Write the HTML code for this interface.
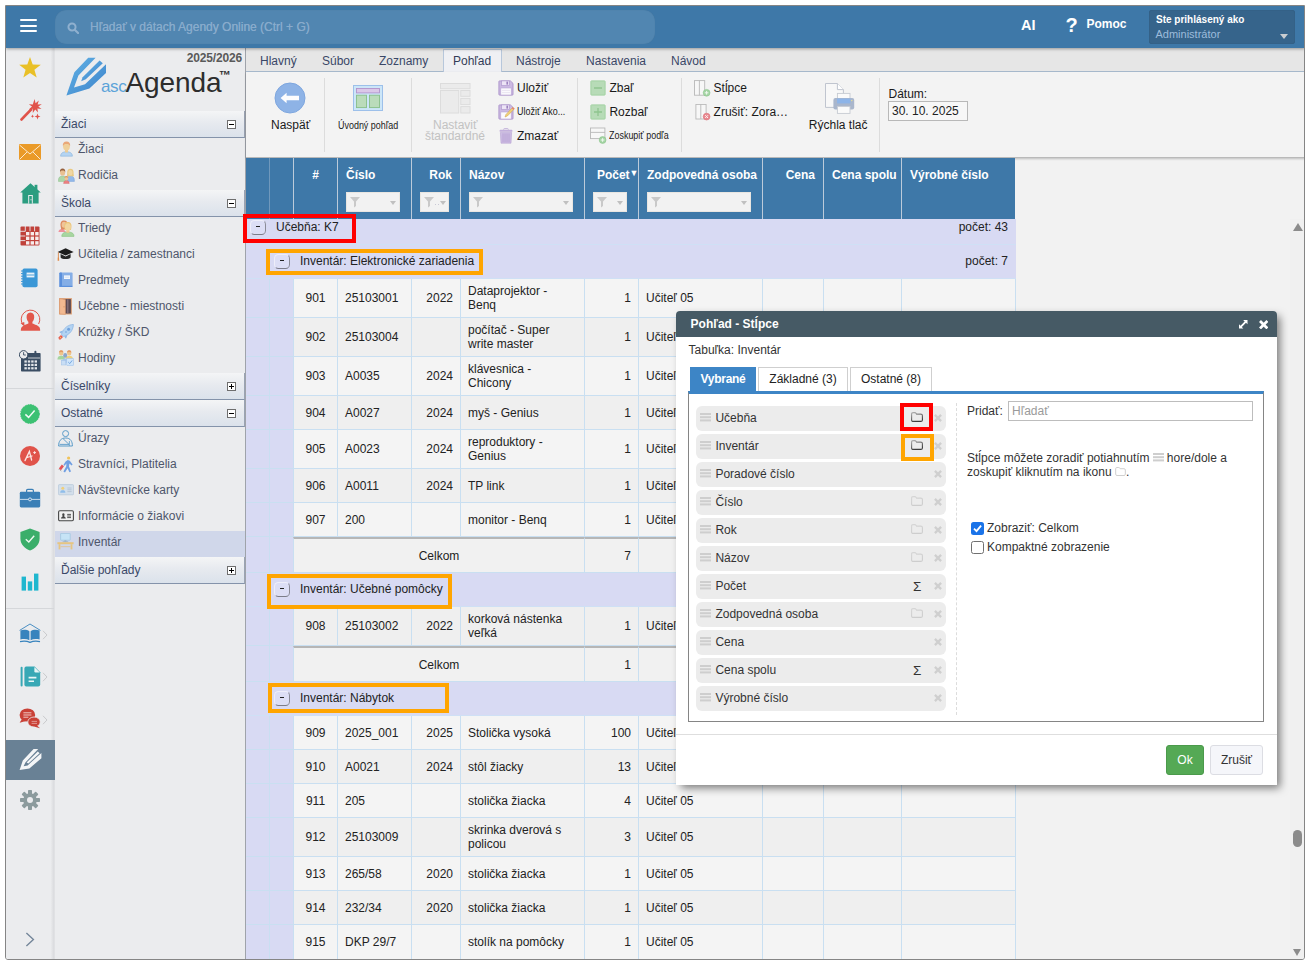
<!DOCTYPE html>
<html lang="sk">
<head>
<meta charset="utf-8">
<title>ascAgenda - Inventár</title>
<style>
*{box-sizing:border-box;margin:0;padding:0}
html,body{width:1310px;height:965px;background:#fff;overflow:hidden}
body{font-family:"Liberation Sans",sans-serif;font-size:12px;color:#222;position:relative}
.abs{position:absolute}
#frame{position:absolute;left:5px;top:5px;width:1300px;height:955px;border:1px solid #858585;overflow:hidden;background:#f2f2f2;border-radius:0 0 3px 3px}
#pg{position:absolute;left:-6px;top:-6px;width:1310px;height:965px}
/* top bar */
#top{position:absolute;left:6px;top:6px;width:1299px;height:42px;background:#3e78a8;box-shadow:0 1px 3px rgba(0,0,0,.35);z-index:5}
#search{position:absolute;left:49px;top:4px;width:600px;height:34px;border-radius:11px;background:#5186b1;box-shadow:inset 0 0 1px rgba(0,0,0,.15)}
#search span{position:absolute;left:35px;top:10px;font-size:12px;color:#88abcc;text-shadow:0 0 0.6px #88abcc;white-space:nowrap}
.ham{position:absolute;left:13.7px;width:17.6px;height:2px;background:#fff;border-radius:1px}
.tb{position:absolute;color:#fff;font-weight:bold;white-space:nowrap}
#user{position:absolute;left:1143px;top:4px;width:146px;height:34px;background:#36648b;border-radius:3px;box-shadow:inset 0 0 1px rgba(0,0,0,.3)}
/* sidebar */
#side{position:absolute;left:6px;top:48px;width:49px;height:912px;background:linear-gradient(to right,#ebecee 44.5px,#e4e5e7 46px,#dcdde0 47.5px,#e2e3e5 49px)}
#side svg{position:absolute}
.sep{position:absolute;left:0;width:48px;height:1px;background:#d5d7da}
/* nav */
#nav{position:absolute;left:55px;top:48px;width:191px;height:912px;background:#ebecee;border-right:1px solid #9fa3aa}
.nh{position:absolute;left:0;width:190px;height:27px;background:linear-gradient(#f4f5f6,#e7eaef 45%,#dbe2eb);border-bottom:1px solid #8493aa;border-right:1px solid #9aa3b3;color:#3a4868;font-size:12px;line-height:26px;padding-left:6px}
.nh i{position:absolute;left:172px;top:9px;width:9px;height:9px;border:1px solid #6e6e6e;background:#fff}
.nh i:before{content:"";position:absolute;left:1px;top:3px;width:5px;height:1px;background:#000}
.nh i.p:after{content:"";position:absolute;left:3px;top:1px;width:1px;height:5px;background:#000}
.ni{position:absolute;left:0;width:190px;height:26px;line-height:25px;padding-left:23px;color:#4e566b;font-size:12px;white-space:nowrap}
.ni svg{position:absolute;left:3px;top:4px}
.ni.sel{background:#d0d7ea;line-height:23px}.ni.sel svg{margin-top:-1px}
</style>
</head>
<body>
<div id="frame"><div id="pg">

<!-- TOP BAR -->
<div id="top">
  <div class="ham" style="top:13px"></div><div class="ham" style="top:18.5px"></div><div class="ham" style="top:24px"></div>
  <div id="search">
    <svg class="abs" style="left:11.5px;top:11.5px" width="12.5" height="12.5" viewBox="0 0 14 14"><circle cx="5.6" cy="5.6" r="4" fill="none" stroke="#8fb0cf" stroke-width="2.2"/><path d="M8.6 8.6 L12.4 12.4" stroke="#8fb0cf" stroke-width="2.4" stroke-linecap="round"/></svg>
    <span>Hľadať v dátach Agendy Online (Ctrl + G)</span>
  </div>
  <div class="tb" style="left:1015px;top:11px;font-size:14.5px">AI</div>
  <div class="tb" style="left:1059.5px;top:8px;font-size:20px">?</div>
  <div class="tb" style="left:1080.5px;top:11px;font-size:12px">Pomoc</div>
  <div id="user">
    <div class="tb" style="left:7px;top:4px;font-size:10px">Ste prihlásený ako</div>
    <div class="abs" style="left:6.5px;top:17.5px;font-size:11px;color:#9dbcdc">Administrátor</div>
    <div class="abs" style="left:131px;top:24px;width:0;height:0;border-left:4px solid transparent;border-right:4px solid transparent;border-top:5px solid #c9cdd1"></div>
  </div>
</div>

<!-- ICON SIDEBAR -->
<div id="side">
  <div class="sep" style="top:340px"></div>
  <div class="sep" style="top:560px"></div>
  <div class="abs" style="left:0;top:692px;width:49px;height:40px;background:#698195"></div>
  <!--SIDEICONS-START-->
<!-- star -->
<svg style="left:13px;top:9px" width="22" height="21" viewBox="0 0 22 21"><path d="M11 0L13.7 7.6 21.8 7.8 15.4 12.7 17.7 20.5 11 15.9 4.3 20.5 6.6 12.7 0.2 7.8 8.3 7.6Z" fill="#e9c027"/></svg>
<!-- wand -->
<svg style="left:14px;top:51px" width="22" height="22" viewBox="0 0 22 22"><path d="M1.6 20.4L11 10.6" stroke="#e0534a" stroke-width="2.8" stroke-linecap="round"/><path d="M14.5 0L15.6 4.2 18.8 1.4 17.6 5.4 21.8 5.2 18.3 7.5 21.5 10 17.4 9.6 18 13.6 15.2 10.6 12.8 14 12.8 9.8 8.8 10.4 12 7.6 8.8 5.2 12.8 5.4Z" fill="#e0534a"/><path d="M17.5 14.5L18.3 16.7 20.5 17.5 18.3 18.3 17.5 20.5 16.7 18.3 14.5 17.5 16.7 16.7Z" fill="#e0534a"/><path d="M12.5 15.5L13 16.7 14.2 17.2 13 17.7 12.5 19 12 17.7 10.8 17.2 12 16.7Z" fill="#e0534a"/></svg>
<!-- envelope -->
<svg style="left:13px;top:96px" width="22" height="16" viewBox="0 0 22 16"><rect width="22" height="16" rx="0.5" fill="#ea9a28"/><path d="M0.5 1L11 10 21.5 1M0.5 15.5L8 8M21.5 15.5L14 8" fill="none" stroke="#fbe9cf" stroke-width="1"/></svg>
<!-- home -->
<svg style="left:14px;top:135px" width="21" height="21" viewBox="0 0 21 21"><path d="M10.5 0.3L20.8 9.6H18.6V20.6H2.4V9.6H0.2Z" fill="#2b9d80"/><rect x="14.6" y="1.8" width="2.8" height="5" fill="#2b9d80"/><rect x="8.2" y="12" width="4.6" height="8.6" fill="#ebecee"/><rect x="9.2" y="13" width="2.6" height="7.6" fill="#2b9d80"/><rect x="10.6" y="16" width="0.8" height="1.4" fill="#ebecee"/></svg>
<!-- grid calendar -->
<svg style="left:14px;top:178px" width="20" height="20" viewBox="0 0 20 20"><rect x="0.5" y="0.5" width="19" height="19" rx="1" fill="#c0413a"/><g fill="#f7eceb"><rect x="6" y="6" width="3.4" height="3.4"/><rect x="10.6" y="6" width="3.4" height="3.4"/><rect x="15.2" y="6" width="3.4" height="3.4"/><rect x="6" y="10.6" width="3.4" height="3.4"/><rect x="10.6" y="10.6" width="3.4" height="3.4"/><rect x="15.2" y="10.6" width="3.4" height="3.4"/><rect x="6" y="15.2" width="3.4" height="3.4"/><rect x="10.6" y="15.2" width="3.4" height="3.4"/><rect x="15.2" y="15.2" width="3.4" height="3.4"/></g><g stroke="#ebecee" stroke-width="0.9"><path d="M5.3 0V5.3M10 0V5.3M14.6 0V5.3M0 5.3H5.3M0 10H5.3M0 14.6H5.3"/></g></svg>
<!-- notebook -->
<svg style="left:15px;top:220px" width="17" height="20" viewBox="0 0 17 20"><rect x="1.4" y="0.6" width="15.2" height="18.6" rx="1.8" fill="#3b97d6"/><g stroke="#3b97d6" stroke-width="1"><path d="M0 3H2M0 5.6H2M0 8.2H2M0 10.8H2M0 13.4H2M0 16H2"/></g><rect x="5.6" y="4.6" width="7.8" height="4.8" fill="#e8f2fa"/><path d="M5.6 7H13.4" stroke="#3b97d6" stroke-width="0.9"/></svg>
<!-- person with arrow circle -->
<svg style="left:14px;top:260px" width="21" height="24" viewBox="0 0 21 24"><path d="M3.2 17.2A9.3 9.3 0 1 1 18.6 16" fill="none" stroke="#e2574b" stroke-width="1"/><path d="M0.6 15.2L4.6 18.4 4.2 14Z" fill="#e2574b"/><path d="M10.4 4.6C13.2 4.6 14.4 6.8 14.2 9.4 14 11.6 13.2 13 12.4 13.8V15.4C14.6 16.4 18.4 17.2 19.6 19.6 20 20.6 20.2 21.6 20.2 22.8H0.8C0.8 21.6 1 20.6 1.4 19.6 2.6 17.2 6.2 16.4 8.4 15.4V13.8C7.6 13 6.8 11.6 6.6 9.4 6.4 6.8 7.6 4.6 10.4 4.6Z" fill="#e2574b"/></svg>
<!-- calendar clock -->
<svg style="left:13px;top:302px" width="22" height="22" viewBox="0 0 22 22"><rect x="2" y="3" width="19.6" height="18.6" rx="0.8" fill="#3a4d63"/><rect x="15.4" y="0.8" width="2" height="4" rx="1" fill="#3a4d63"/><g fill="#e3e6ea"><rect x="5.4" y="10.4" width="2.4" height="2.2"/><rect x="8.8" y="10.4" width="2.4" height="2.2"/><rect x="12.2" y="10.4" width="2.4" height="2.2"/><rect x="15.6" y="10.4" width="2.4" height="2.2"/><rect x="5.4" y="13.8" width="2.4" height="2.2"/><rect x="8.8" y="13.8" width="2.4" height="2.2"/><rect x="12.2" y="13.8" width="2.4" height="2.2"/><rect x="15.6" y="13.8" width="2.4" height="2.2"/><rect x="5.4" y="17.2" width="2.4" height="2.2"/><rect x="8.8" y="17.2" width="2.4" height="2.2"/><rect x="12.2" y="17.2" width="2.4" height="2.2"/><rect x="15.6" y="17.2" width="2.4" height="2.2"/></g><path d="M9 8H21" stroke="#ebecee" stroke-width="0.8"/><circle cx="4.6" cy="4.8" r="4.2" fill="#ebecee" stroke="#3a4d63" stroke-width="1"/><path d="M4.6 2.2V5H6.8" fill="none" stroke="#3a4d63" stroke-width="0.9"/></svg>
<!-- check circle -->
<svg style="left:14px;top:356px" width="20" height="20" viewBox="0 0 20 20"><circle cx="10" cy="10" r="9.4" fill="#3cc173" stroke="#3cc173" stroke-width="1" stroke-dasharray="1.6 1"/><path d="M5.4 10.4L8.6 13.4 14.6 6.6" fill="none" stroke="#f2fbf6" stroke-width="1.5"/></svg>
<!-- A+ -->
<svg style="left:14px;top:398px" width="20" height="20" viewBox="0 0 20 20"><circle cx="10" cy="10" r="10" fill="#e0534a"/><path d="M5 14.6L9.4 5.4 11.6 14M6.4 11.6L12 10" fill="none" stroke="#fbe6e4" stroke-width="1.3" stroke-linecap="round"/><path d="M13.2 6.6H16M14.6 5.2V8" stroke="#fbe6e4" stroke-width="1"/></svg>
<!-- briefcase -->
<svg style="left:13px;top:440px" width="22" height="20" viewBox="0 0 22 20"><path d="M7.6 4.2V2.6Q7.6 1.4 8.8 1.4H13.2Q14.4 1.4 14.4 2.6V4.2" fill="none" stroke="#3b7fb6" stroke-width="1.2"/><rect x="0.8" y="3.8" width="20.4" height="15.6" rx="1.4" fill="#3b7fb6"/><path d="M0.8 11.4H21.2" stroke="#c9dcec" stroke-width="1"/><circle cx="11" cy="11.4" r="1.5" fill="#3b7fb6" stroke="#dce8f2" stroke-width="0.9"/></svg>
<!-- shield -->
<svg style="left:14px;top:480px" width="20" height="23" viewBox="0 0 20 23"><path d="M10 0.6L19.6 4V10.6C19.6 16.6 15 20.6 10 22.6 5 20.6 0.4 16.6 0.4 10.6V4Z" fill="#3aae6a"/><path d="M5.8 11.2L8.8 14 14.2 7.8" fill="none" stroke="#eef9f2" stroke-width="1.4"/></svg>
<!-- bars -->
<svg style="left:15px;top:525px" width="18" height="18" viewBox="0 0 18 18"><rect x="0.6" y="3.6" width="4.4" height="14" fill="#1fb7cf"/><rect x="6.8" y="8.4" width="4.4" height="9.2" fill="#1fb7cf"/><rect x="13" y="0.6" width="4.4" height="17" fill="#1fb7cf"/></svg>
<!-- book -->
<svg style="left:13px;top:575px" width="22" height="21" viewBox="0 0 22 21"><path d="M0.6 7.4L11 1 21.4 7.4" fill="none" stroke="#3783bd" stroke-width="0.9"/><path d="M1.4 7.4C4.8 6.4 8 6.6 10.4 8.2V17.2C8 16 4.8 15.8 1.4 16.6ZM20.6 7.4C17.2 6.4 14 6.6 11.6 8.2V17.2C14 16 17.2 15.8 20.6 16.6Z" fill="#3783bd"/><path d="M1 18.6C4.6 17.8 8 18 11 19.4 14 18 17.4 17.8 21 18.6" fill="none" stroke="#3783bd" stroke-width="1.2"/></svg>
<svg style="left:36px;top:582px" width="6" height="10" viewBox="0 0 6 10"><path d="M1 0.8L5 5 1 9.2" fill="none" stroke="#c9cacc" stroke-width="1"/></svg>
<!-- doc -->
<svg style="left:14px;top:618px" width="21" height="21" viewBox="0 0 21 21"><rect x="0.6" y="0.8" width="2" height="19.6" rx="1" fill="#38a8b5"/><path d="M4.4 2.4Q4.4 0.6 6.2 0.6H14.6L20.2 6.2V18.4Q20.2 20.4 18.2 20.4H6.2Q4.4 20.4 4.4 18.4Z" fill="#38a8b5"/><path d="M14.4 1V5.2Q14.4 6.4 15.6 6.4H19.8" fill="#e8f5f6"/><path d="M8.6 11.6H16.4M8.6 15.2H14" stroke="#e8f5f6" stroke-width="1.6"/></svg>
<svg style="left:36px;top:624px" width="6" height="10" viewBox="0 0 6 10"><path d="M1 0.8L5 5 1 9.2" fill="none" stroke="#c9cacc" stroke-width="1"/></svg>
<!-- chat -->
<svg style="left:13px;top:660px" width="22" height="21" viewBox="0 0 22 21"><ellipse cx="8.4" cy="7" rx="7.8" ry="6.6" fill="#c94137"/><path d="M3 11L0.6 14.8 7 13Z" fill="#c94137"/><ellipse cx="15" cy="14" rx="6.2" ry="5" fill="#c94137" stroke="#ebecee" stroke-width="0.8"/><path d="M18 17.4L21 20.2 15 18.6Z" fill="#c94137"/><path d="M4.4 4.8H12.4M4.4 7H12.4M4.4 9.2H9.4" stroke="#f0c8c4" stroke-width="1"/><path d="M12.6 13.4H18M12.6 15.4H18" stroke="#e9a9a3" stroke-width="0.8"/></svg>
<svg style="left:36px;top:667px" width="6" height="10" viewBox="0 0 6 10"><path d="M1 0.8L5 5 1 9.2" fill="none" stroke="#c9cacc" stroke-width="1"/></svg>
<!-- pencil white -->
<svg style="left:13px;top:700px" width="23" height="23" viewBox="0 0 23 23"><path d="M0.6 22L3.8 12.6 14.6 1H19.2L6.4 14.4 4.6 18.2 8.6 17.4 22.4 5V10.2L10.4 20.4Z" fill="#f4f6f8"/><path d="M7.6 14.6L18.8 3.6 20.6 5.2 9.4 15.6Z" fill="#f4f6f8"/></svg>
<!-- gear -->
<svg style="left:14px;top:742px" width="20" height="20" viewBox="0 0 20 20"><g fill="#8c9b9d"><circle cx="10" cy="10" r="6.8"/><g id="gt"><rect x="8" y="0" width="4" height="20" rx="0.8"/></g><rect x="8" y="0" width="4" height="20" rx="0.8" transform="rotate(45 10 10)"/><rect x="8" y="0" width="4" height="20" rx="0.8" transform="rotate(90 10 10)"/><rect x="8" y="0" width="4" height="20" rx="0.8" transform="rotate(135 10 10)"/></g><circle cx="10" cy="10" r="3" fill="#ebecee"/></svg>
<!-- bottom chevron -->
<svg style="left:19px;top:884px" width="10" height="15" viewBox="0 0 10 15"><path d="M1.4 1L8.4 7.5 1.4 14" fill="none" stroke="#75879a" stroke-width="1.4"/></svg>
<!--SIDEICONS-END-->
</div>

<!-- NAV PANEL -->
<div id="nav">
  <div class="abs" style="right:3px;top:3px;font-size:12px;font-weight:bold;color:#5a5a5a;letter-spacing:-0.15px">2025/2026</div>
  <!--LOGO-START-->
<svg class="abs" style="left:11px;top:9px" width="41" height="40" viewBox="0 0 41 40"><defs><linearGradient id="lg" x1="0" y1="0" x2="1" y2="1"><stop offset="0" stop-color="#62b3e6"/><stop offset="1" stop-color="#3c82ca"/></linearGradient></defs><path d="M0.4 38.6L8.4 15.2 22.2 0.8H29.6L12.4 18.6 8 30.4 19 27.2 40 7.2V16L23.4 31.4Z" fill="url(#lg)"/><path d="M33.6 3.6L36.8 6.2 19.8 22.2 15.2 24.2 16.6 20.2Z" fill="url(#lg)"/></svg>
<div class="abs" style="left:46px;top:28.5px;font-size:17px;color:#5ba3d9;letter-spacing:-0.4px;line-height:20px">asc</div>
<div class="abs" style="left:70.5px;top:19px;font-size:28px;color:#2d2d2d;line-height:32px;letter-spacing:-0.1px">Agenda</div>
<div class="abs" style="left:164px;top:20px;font-size:12px;font-weight:bold;color:#2d2d2d;line-height:14px;letter-spacing:0">™</div>
<!--LOGO-END-->
  <div class="nh" style="top:63px">Žiaci<i></i></div>
  <div class="ni" style="top:89px"><svg style="left:4.5px;top:4px" width="13" height="16" viewBox="0 0 14 17"><path d="M0.6 16.2C0.6 12.8 3.4 11.4 7 11.4S13.4 12.8 13.4 16.2Z" fill="#b4d4f2" stroke="#8fb6de" stroke-width="0.7"/><rect x="5.4" y="8.6" width="3.2" height="3.6" fill="#eccb93"/><ellipse cx="7" cy="5.6" rx="3.7" ry="4.6" fill="#efd09a"/><path d="M3.1 5.6C2.6 2.2 4.4 0.5 7 0.5S11.4 2.2 10.9 5.6C10.2 3.8 9 3.2 7 3.2S3.8 3.8 3.1 5.6Z" fill="#e9a778"/></svg>Žiaci</div>
  <div class="ni" style="top:115px"><svg style="left:3px;top:4.5px" width="17" height="16" viewBox="0 0 17 16"><path d="M0.4 12.6C0.4 9.4 2 8 4.6 8S8.8 9.4 8.8 12.6V13.4H0.4Z" fill="#add6a9" stroke="#8fc08a" stroke-width="0.5"/><ellipse cx="4.6" cy="4.4" rx="2.5" ry="3.2" fill="#e9c091"/><path d="M2 4.4C1.6 1.6 2.8 0.4 4.6 0.4S7.6 1.6 7.2 4.4C6.6 2.8 5.8 2.6 4.6 2.6S2.6 2.8 2 4.4Z" fill="#96603d"/><path d="M8.4 12.6C8.4 9.4 10 8 12.4 8S16.4 9.4 16.4 12.6V13.4H8.4Z" fill="#93b9ea" stroke="#76a0d8" stroke-width="0.5"/><path d="M9.2 5.4C9 2.2 10.2 0.8 12.4 0.8S15.8 2.2 15.6 5.4L15.9 8.2H8.9Z" fill="#e9c983"/><ellipse cx="12.4" cy="4.8" rx="2.1" ry="2.8" fill="#f0d7a4"/><path d="M5.6 15.6C5.6 13.4 6.6 12.4 8.4 12.4S11.2 13.4 11.2 15.6Z" fill="#ea7f80" stroke="#d86468" stroke-width="0.4"/><ellipse cx="8.4" cy="10.4" rx="1.8" ry="2.1" fill="#eec594"/><path d="M6.6 10.2C6.4 8.6 7.2 7.9 8.4 7.9S10.4 8.6 10.2 10.2C9.8 9.4 9.2 9.2 8.4 9.2S7 9.4 6.6 10.2Z" fill="#d9955c"/></svg>Rodičia</div>
  <div class="nh" style="top:142px">Škola<i></i></div>
  <div class="ni" style="top:168px"><svg style="left:2.5px;top:3.5px" width="17" height="17" viewBox="0 0 17 17"><path d="M0.4 12C0.8 9.6 2.4 8.8 5 8.8L8 12Z" fill="#ef919c"/><path d="M2.6 6C2 2.4 3.4 0.4 6 0.4S9.6 2 9.4 4L7 9.4H3.2Z" fill="#dd8a5e"/><ellipse cx="6" cy="4.8" rx="2.4" ry="3" fill="#efc49a"/><path d="M3.8 16.4C3.8 13.2 6.2 12 9.8 12S16 13.2 16 16.4Z" fill="#a8d6a0" stroke="#88c282" stroke-width="0.6"/><rect x="8.4" y="9.6" width="3" height="3.2" fill="#ecca90"/><path d="M6.4 7.4C5.8 3.6 7.4 2 9.9 2S14 3.6 13.4 7.4L13 10H6.8Z" fill="#ecc77d"/><ellipse cx="9.9" cy="7" rx="2.9" ry="3.8" fill="#f2d6a0"/></svg>Triedy</div>
  <div class="ni" style="top:194px"><svg style="left:2px;top:6px" width="17" height="13" viewBox="0 0 17 13"><path d="M8.6 0.3L16.6 4 8.6 7.6 0.6 4Z" fill="#1c1c1c"/><path d="M3.6 6V9.4C5 11.4 12.2 11.4 13.6 9.4V6L8.6 8.4Z" fill="#262626"/><path d="M1.4 4.4V10.6" stroke="#d8884a" stroke-width="0.9"/><path d="M0.8 9.6H2L2.2 12.8H0.6Z" fill="#e08b4a"/></svg>Učitelia / zamestnanci</div>
  <div class="ni" style="top:220px"><svg style="left:4px;top:4px" width="14" height="16" viewBox="0 0 14 16"><rect x="0.4" y="0.4" width="13.2" height="14.6" rx="1" fill="#85aee6"/><rect x="0.4" y="0.4" width="2.6" height="14.6" rx="0.8" fill="#5b90dc"/><path d="M0.6 14.4H13.4" stroke="#5b90dc" stroke-width="1.2"/><rect x="5" y="3.4" width="6" height="3.6" fill="#f3f7fc"/><path d="M5.6 5.2H10.4" stroke="#c3d6f0" stroke-width="0.7"/></svg>Predmety</div>
  <div class="ni" style="top:246px"><svg style="left:4px;top:4px" width="13" height="17" viewBox="0 0 13 17"><rect x="0.6" y="0.6" width="11.8" height="15.4" fill="#5c4a52" stroke="#e0a67c" stroke-width="1"/><path d="M0.6 0.6L6.4 1.6V16.4L0.6 16Z" fill="#f2b991" stroke="#d9966a" stroke-width="0.6"/><rect x="8.2" y="1.4" width="1.2" height="14" fill="#8a7680"/><circle cx="5" cy="8.8" r="0.6" fill="#c88a5e"/></svg>Učebne - miestnosti</div>
  <div class="ni" style="top:272px"><svg style="left:3px;top:4px" width="16" height="16" viewBox="0 0 16 16"><path d="M15.4 0.4C11 0.6 7.4 2.8 4.8 7.2L3.4 10.4 5.6 12.6 8.8 11.2C13.2 8.6 15.2 5 15.4 0.4Z" fill="#b3d3f2" stroke="#86b2e2" stroke-width="0.7"/><circle cx="10.6" cy="5.2" r="1.5" fill="#6fa0dc"/><circle cx="8" cy="8" r="0.9" fill="#86b2e2"/><path d="M5 6.6L1.2 8 3.2 9.6ZM9.4 11L8 14.8 6.4 12.8Z" fill="#8ab5e6"/><path d="M3 11L0.4 13.6 1 15.4 2.6 15.6 5 13Z" fill="#e4574f"/><path d="M2.6 12.6L1.4 14.2 2.2 14.6 3.4 13.4Z" fill="#f5c05a"/></svg>Krúžky / ŠKD</div>
  <div class="ni" style="top:298px"><svg style="left:2px;top:4px" width="17" height="16" viewBox="0 0 17 16"><ellipse cx="4.2" cy="3" rx="2.2" ry="2.6" fill="#efc58c"/><path d="M2 2.6C2 0.8 3 0.2 4.2 0.2S6.4 0.8 6.4 2.6C5.6 1.8 2.8 1.8 2 2.6Z" fill="#e39a62"/><ellipse cx="12.2" cy="3" rx="2.2" ry="2.6" fill="#efc58c"/><path d="M10 2.6C10 0.8 11 0.2 12.2 0.2S14.4 0.8 14.4 2.6C13.6 1.8 10.8 1.8 10 2.6Z" fill="#e39a62"/><path d="M0.4 9.6C0.4 6.8 2 5.8 4.2 5.8S8 6.8 8 9.6Z" fill="#a5d59f"/><path d="M8.4 9.6C8.4 6.8 10 5.8 12.2 5.8S16 6.8 16 9.6Z" fill="#f0d27a"/><ellipse cx="8.2" cy="5.4" rx="2" ry="2.3" fill="#8da5c8"/><path d="M4.6 13C4.6 9.8 6 8.4 8.2 8.4S11.8 9.8 11.8 13Z" fill="#a9c6ec"/><rect x="4.4" y="10.4" width="4.4" height="4.6" fill="#c9def5" stroke="#a0c0e6" stroke-width="0.5"/><rect x="9.6" y="8.4" width="7" height="7" rx="0.6" fill="#d2e6fa" stroke="#9cc0ea" stroke-width="0.6"/><path d="M11.2 12L12.8 13.6 15.2 10.4" fill="none" stroke="#6a9fdc" stroke-width="0.9"/></svg>Hodiny</div>
  <div class="nh" style="top:325px">Číselníky<i class="p"></i></div>
  <div class="nh" style="top:352px">Ostatné<i></i></div>
  <div class="ni" style="top:378px"><svg style="left:3px;top:4px" width="15" height="17" viewBox="0 0 15 17"><circle cx="7.6" cy="3.6" r="3" fill="none" stroke="#5a9bc8" stroke-width="1"/><path d="M0.6 16C0.6 11.4 2.6 8 7.6 8S14.4 11.4 14.4 16Z" fill="none" stroke="#5a9bc8" stroke-width="1"/><path d="M5 8.6L11 14.4H1.6" fill="none" stroke="#5a9bc8" stroke-width="0.9"/><path d="M11.4 11V16" stroke="#5a9bc8" stroke-width="0.8"/></svg>Úrazy</div>
  <div class="ni" style="top:404px"><svg style="left:3px;top:4px" width="16" height="17" viewBox="0 0 16 17"><circle cx="10.6" cy="2" r="1.6" fill="#f0c35a"/><path d="M9.8 4L7.6 5.4 5.4 9 6.6 9.8 8.4 7.4 8.2 10.4 5.4 15.6 7 16.4 9.6 12.2 11.4 16.2 13 15.6 11 10.6 11.4 7.4 13.6 9.6 14.6 8.6 11.8 4.8Z" fill="#709fe2"/><path d="M0.8 12.4L3.8 8.6 6 10.2 3 14.2Z" fill="#e4555a"/><path d="M2.4 14.4L3.2 15M0.8 13.2L1.4 13.8" stroke="#777" stroke-width="0.8"/></svg>Stravníci, Platitelia</div>
  <div class="ni" style="top:430px"><svg style="left:3px;top:6px" width="16" height="12" viewBox="0 0 16 12"><rect x="0.4" y="0.6" width="15.2" height="10.2" rx="1" fill="#d3dfeb" stroke="#b5c6d8" stroke-width="0.7"/><circle cx="4.8" cy="4.2" r="1.5" fill="#f0cf7a"/><path d="M2.2 8.8C2.2 6.8 3.4 6.2 4.8 6.2S7.4 6.8 7.4 8.8Z" fill="#8fbdea"/><path d="M9.4 4H13.6M9.4 5.8H13.6M9.4 7.6H13.6" stroke="#b4c4d4" stroke-width="0.9"/></svg>Návštevnícke karty</div>
  <div class="ni" style="top:456px"><svg style="left:3px;top:6px" width="16" height="12" viewBox="0 0 16 12"><rect x="0.6" y="0.8" width="14.8" height="10" rx="1.2" fill="#f1f1f1" stroke="#454545" stroke-width="1.1"/><path d="M3 8.6C3 7.2 4 7 4.6 6.6V5.8C4 5.2 4 3.2 5.4 3.2S6.8 5.2 6.2 5.8V6.6C6.8 7 7.8 7.2 7.8 8.6Z" fill="#454545"/><path d="M9.2 4.4H13M9.2 6H13M9.2 7.6H13" stroke="#454545" stroke-width="0.9"/></svg>Informácie o žiakovi</div>
  <div class="ni sel" style="top:483px"><svg style="left:2px;top:3px" width="17" height="17" viewBox="0 0 17 17"><rect x="3.6" y="0.4" width="9.6" height="6.8" rx="0.4" fill="#c6e4f6" stroke="#9cc4e0" stroke-width="0.7"/><rect x="7.4" y="7.4" width="2" height="1.2" fill="#9ab0c0"/><rect x="5.6" y="8.4" width="5.6" height="0.8" fill="#9ab0c0"/><rect x="0.4" y="9.2" width="16.2" height="2" fill="#e6c582"/><rect x="1.6" y="11.2" width="1.8" height="5.2" fill="#e6c582"/><rect x="13.6" y="11.2" width="1.8" height="5.2" fill="#e6c582"/><rect x="3.4" y="13" width="10.2" height="1.2" fill="#dcc8a8"/></svg>Inventár</div>
  <div class="nh" style="top:509px">Ďalšie pohľady<i class="p"></i></div>
</div>

<!--MAIN-START-->
<style>
/* main */
#tabs{position:absolute;left:246px;top:48px;width:1059px;height:24px;background:#e6e6e6;border-bottom:1px solid #a9bbcf}
#tabs span{position:absolute;top:6px;font-size:12px;color:#3a4767;white-space:nowrap}
#tabs .act{position:absolute;left:197px;top:1px;width:59px;height:23px;background:#eff0f4;border:1px solid #b7c7db;border-bottom:0}
#rib{position:absolute;left:246px;top:72px;width:1059px;height:86px;background:#f3f3f3;border-bottom:1px solid #b9b9b9;box-shadow:0 1px 2px rgba(0,0,0,.22);z-index:3}
#rib .vs{position:absolute;top:6px;width:1px;height:74px;background:#dcdcdc}
#rib .t{position:absolute;white-space:nowrap;color:#1a1a1a;font-size:12px;line-height:14px}
#rib .s{font-size:10px;line-height:12px;transform:scaleX(0.895);transform-origin:0 0}
#rib svg{position:absolute}
/* table */
#th{position:absolute;left:246px;top:158px;width:769px;overflow:hidden;z-index:4;height:61px;background:#3e78a8}
#th .h{position:absolute;top:0;height:61px;border-right:1px solid #bccbda;color:#fff;font-weight:bold;font-size:12px;padding:10px 8px 0 8px;white-space:nowrap}
#th .f{position:absolute;top:34px;height:20px;background:#f2f2f2;border:1px solid #e9e6e1}
#th .f svg{position:absolute;left:3px;top:4px}
#th .f i{position:absolute;right:3px;top:7.5px;width:0;height:0;border-left:3.5px solid transparent;border-right:3.5px solid transparent;border-top:4px solid #c0c0c0}
#tbl{position:absolute;left:246px;top:0;width:770px;height:960px}
.gr{position:absolute;left:0;width:770px;background:#d8daf3;border-bottom:1px solid #cfe0f5}
.gr u{position:absolute;left:23px;top:0;bottom:0;width:1px;background:#cde0f3}
.gr span{position:absolute;white-space:nowrap;color:#222;font-size:12px;line-height:15px}
.gr em{position:absolute;right:8px;font-style:normal;font-size:12px;line-height:15px;color:#222}
.tg{position:absolute;width:16px;height:15px;border-radius:4.5px;background:#dcdef5;border:1px solid;border-color:#eeeef9 #8a8b97 #7c7d89 #eeeef9}
.tg:after{content:"";position:absolute;left:5px;top:5px;width:4px;height:1px;background:#222}
.rw{position:absolute;left:0;width:770px;background:#d8daf3}
.rw u{position:absolute;left:23px;top:0;bottom:0;width:1px;background:#c9dff1;border-bottom:0}
.rw u.u2{left:0;width:48px;top:auto;bottom:0;height:1px;background:#c9dff1}
.rw .c{position:absolute;top:0;bottom:0;background:#f4f4f4;border-right:1px solid #c9dff1;border-bottom:1px solid #c9dff1;padding:0 7px;white-space:nowrap;font-size:12px;color:#222}
.rw.a .c{background:#efefef}
.rw .num{text-align:center;padding:0;border-left:1px solid #c9dff1}
.rw .rok,.rw .poc{text-align:right}
.rw .two{display:inline-block;vertical-align:middle;line-height:14px;position:relative;top:-1px}
.rw s{position:absolute;left:48px;top:0;width:722px;height:3px;background:linear-gradient(#b4b7ba,#c6c8ca 60%,#e2e2e2)}
.ck .c{background:#f1f1f1;border-top:2px solid #b6b6b6;line-height:34px}
</style>
<div id="tabs">
  <div class="act"></div>
  <span style="left:14px">Hlavný</span><span style="left:76px">Súbor</span><span style="left:133px">Zoznamy</span><span style="left:207px;color:#333c58">Pohľad</span><span style="left:270px">Nástroje</span><span style="left:340px">Nastavenia</span><span style="left:425px">Návod</span>
</div>
<div id="rib">
  <div class="vs" style="left:78px"></div><div class="vs" style="left:165px"></div><div class="vs" style="left:331px"></div><div class="vs" style="left:435px"></div><div class="vs" style="left:633px"></div>
  <div class="t" style="left:25px;top:46px">Naspäť</div>
  <div class="t s" style="left:92px;top:47.5px">Úvodný pohľad</div>
  <div class="t" style="left:187px;top:46px;color:#c2c2c2">Nastaviť</div>
  <div class="t" style="left:179px;top:56.5px;color:#c2c2c2">štandardné</div>
  <div class="t" style="left:271px;top:9px">Uložiť</div>
  <div class="t s" style="left:271px;top:33.5px">Uložiť Ako...</div>
  <div class="t" style="left:271px;top:57px">Zmazať</div>
  <div class="t" style="left:363.4px;top:9px">Zbaľ</div>
  <div class="t" style="left:363.4px;top:33px">Rozbaľ</div>
  <div class="t s" style="left:363.4px;top:57.5px">Zoskupiť podľa</div>
  <div class="t" style="left:467.6px;top:9px">Stĺpce</div>
  <div class="t" style="left:467.6px;top:33px">Zrušiť: Zora…</div>
  <div class="t" style="left:562.8px;top:46px">Rýchla tlač</div>
  <div class="t" style="left:642.5px;top:15px">Dátum:</div>
  <div class="abs" style="left:642px;top:29px;width:80px;height:20px;border:1px solid #b8b8b8;background:#f7f7f7;font-size:12px;line-height:18px;padding-left:3px;color:#222">30. 10. 2025</div>
  <!--RIBICONS-START-->
<!-- back -->
<svg style="left:28px;top:10px" width="32" height="32" viewBox="0 0 32 32"><circle cx="16" cy="16" r="15" fill="#8eb3e6" stroke="#7ea6de" stroke-width="1"/><path d="M6.6 16L12.6 10.8V13.8H25V18.2H12.6V21.2Z" fill="#fdfdfe"/></svg>
<!-- uvodny -->
<svg style="left:107px;top:13px" width="30" height="26" viewBox="0 0 30 26"><rect x="0.5" y="0.5" width="29" height="25" fill="#cce6f8" stroke="#9dc0ea"/><rect x="3.5" y="3.5" width="23" height="4.4" fill="#dbc8e8" stroke="#b293ca" stroke-width="0.9"/><rect x="3.5" y="10.2" width="10" height="12.4" fill="#badcba" stroke="#88bf88" stroke-width="0.9"/><rect x="16.5" y="10.2" width="10" height="12.4" fill="#badcba" stroke="#88bf88" stroke-width="0.9"/></svg>
<!-- nastavit -->
<svg style="left:194px;top:11px" width="31" height="31" viewBox="0 0 31 31"><g fill="#ebebeb" stroke="#dcdcdc" stroke-width="1"><rect x="0.5" y="0.5" width="29.5" height="5.2"/><rect x="0.5" y="7.5" width="18.2" height="22.5"/><rect x="20.8" y="7.5" width="9.2" height="5.8"/><rect x="20.8" y="15.4" width="9.2" height="6.2"/><rect x="20.8" y="23.6" width="9.2" height="6.4"/></g></svg>
<!-- save -->
<svg style="left:252px;top:8px" width="16" height="16" viewBox="0 0 16 16"><path d="M0.9 1.6Q0.9 0.9 1.6 0.9H12.4L15 3.4V14.4Q15 15.1 14.4 15.1H1.6Q0.9 15.1 0.9 14.4Z" fill="#cbb9e2" stroke="#ab93cb" stroke-width="0.9"/><rect x="3.6" y="0.9" width="7.6" height="4.6" fill="#ece4f5" stroke="#ab93cb" stroke-width="0.6"/><rect x="8.4" y="1.6" width="1.6" height="3" fill="#9a80bd"/><rect x="2.8" y="8" width="10.4" height="7" fill="#fbfafd" stroke="#b7a3d3" stroke-width="0.6"/><path d="M4 10.4H12M4 12.6H12" stroke="#e2dced" stroke-width="0.7"/></svg>
<!-- save as -->
<svg style="left:252px;top:32px" width="17" height="16" viewBox="0 0 17 16"><path d="M0.9 1.6Q0.9 0.9 1.6 0.9H12.4L15 3.4V14.4Q15 15.1 14.4 15.1H1.6Q0.9 15.1 0.9 14.4Z" fill="#cbb9e2" stroke="#ab93cb" stroke-width="0.9"/><rect x="3.6" y="0.9" width="7.6" height="4.6" fill="#ece4f5" stroke="#ab93cb" stroke-width="0.6"/><rect x="8.4" y="1.6" width="1.6" height="3" fill="#9a80bd"/><rect x="2.8" y="8" width="10.4" height="7" fill="#fbfafd" stroke="#b7a3d3" stroke-width="0.6"/><path d="M14.8 3.2L16.4 4.8 9.4 12 7 13 8 10.4Z" fill="#f0d079" stroke="#c9a24a" stroke-width="0.5"/><path d="M14.8 3.2L16.4 4.8 15.4 5.8 13.8 4.2Z" fill="#e8787c"/></svg>
<!-- trash -->
<svg style="left:253px;top:56px" width="14" height="16" viewBox="0 0 14 16"><path d="M4.6 1.6Q4.6 0.6 5.6 0.6H8.4Q9.4 0.6 9.4 1.6" fill="none" stroke="#b7a3d3" stroke-width="0.8"/><rect x="0.6" y="1.8" width="12.8" height="2" rx="0.6" fill="#c3b0dc"/><path d="M1.4 4.4H12.6L12 15.2H2Z" fill="#cdbce3" stroke="#b7a3d3" stroke-width="0.6"/><path d="M4 5.4V14.2M6 5.4V14.2M8 5.4V14.2M10 5.4V14.2" stroke="#b39fd0" stroke-width="0.8"/></svg>
<!-- zbal -->
<svg style="left:344px;top:8px" width="16" height="16" viewBox="0 0 16 16"><rect x="0.9" y="0.9" width="14.2" height="14.2" rx="0.6" fill="#b7dbb7" stroke="#a2d2a2" stroke-width="1"/><path d="M4 8H12" stroke="#8fc58f" stroke-width="1.3"/></svg>
<!-- rozbal -->
<svg style="left:344px;top:32px" width="16" height="16" viewBox="0 0 16 16"><rect x="0.9" y="0.9" width="14.2" height="14.2" rx="0.6" fill="#b7dbb7" stroke="#a2d2a2" stroke-width="1"/><path d="M4 8H12M8 4V12" stroke="#8fc58f" stroke-width="1.3"/></svg>
<!-- zoskupit -->
<svg style="left:344px;top:55px" width="17" height="17" viewBox="0 0 17 17"><rect x="0.5" y="1" width="14.4" height="10.6" fill="#f7f7f7" stroke="#b8b8b8" stroke-width="0.9"/><path d="M0.5 5.4H15" stroke="#b8b8b8" stroke-width="0.9"/><circle cx="12.6" cy="13" r="3.4" fill="#a5d4a5" stroke="#8cc68c" stroke-width="0.6"/><path d="M10.8 13H14.4M12.6 11.2V14.8" stroke="#eef8ee" stroke-width="1"/></svg>
<!-- stlpce -->
<svg style="left:448px;top:8px" width="17" height="17" viewBox="0 0 17 17"><rect x="0.5" y="0.6" width="10.2" height="14.6" fill="#f7f7f7" stroke="#b8b8b8" stroke-width="0.9"/><path d="M5.4 0.6V15.2" stroke="#b8b8b8" stroke-width="0.9"/><circle cx="12.6" cy="12.8" r="3.4" fill="#a5d4a5" stroke="#8cc68c" stroke-width="0.6"/><path d="M10.8 12.8H14.4M12.6 11V14.6" stroke="#eef8ee" stroke-width="1"/></svg>
<!-- zrusit -->
<svg style="left:449px;top:32px" width="16" height="17" viewBox="0 0 16 17"><rect x="0.9" y="0.4" width="10.2" height="14.6" fill="#f7f7f7" stroke="#b8b8b8" stroke-width="0.9"/><path d="M5.8 0.4V15" stroke="#b8b8b8" stroke-width="0.9"/><circle cx="11.6" cy="12.6" r="3.4" fill="#e98990" stroke="#de6f78" stroke-width="0.6"/><path d="M10.2 11.2L13 14M13 11.2L10.2 14" stroke="#fdeff0" stroke-width="1"/></svg>
<!-- printer -->
<svg style="left:579px;top:11px" width="30" height="31" viewBox="0 0 30 31"><path d="M0.5 0.5H12.4L18.4 6.6V24.4H0.5Z" fill="#f8f8f8" stroke="#c0c5cf" stroke-width="1"/><path d="M12.4 0.5V6.6H18.4" fill="#fff" stroke="#c0c5cf" stroke-width="1"/><rect x="12.4" y="10.4" width="12.6" height="8" fill="#fafafa" stroke="#c6cad2" stroke-width="0.9"/><rect x="8.4" y="15" width="20.8" height="11.6" rx="2" fill="#a9b6cc"/><rect x="12" y="15.6" width="13.4" height="4.8" fill="#8db4e8"/><circle cx="26.8" cy="17.6" r="0.7" fill="#f0e58a"/><rect x="12.4" y="23.4" width="12.6" height="7" fill="#fafafa" stroke="#c6cad2" stroke-width="0.9"/></svg>
<!--RIBICONS-END-->
</div>
<div id="th">
  <div class="h" style="left:0;width:24px;border-right-color:#6f98bc"></div>
  <div class="h" style="left:24px;width:24px"></div>
  <div class="h" style="left:48px;width:44px;text-align:center;padding-left:0;padding-right:0">#</div>
  <div class="h" style="left:92px;width:74px">Číslo</div>
  <div class="h" style="left:166px;width:49px;text-align:right">Rok</div>
  <div class="h" style="left:215px;width:124px">Názov</div>
  <div class="h" style="left:339px;width:54px;text-align:right;padding-right:6px">Počet<span style="font-size:9px;position:relative;top:-3px;margin-right:-6.5px">▼</span></div>
  <div class="h" style="left:393px;width:124px">Zodpovedná osoba</div>
  <div class="h" style="left:517px;width:61px;text-align:right">Cena</div>
  <div class="h" style="left:578px;width:78px;text-align:right;padding-right:5px">Cena spolu</div>
  <div class="h" style="left:656px;width:114px;border-right:0">Výrobné číslo</div>
  <div class="f" style="left:100px;width:54px"><svg width="10" height="11" viewBox="0 0 10 11"><path d="M0 0H10L6 4.6V9L4 10.4V4.6Z" fill="#c9c9c9"/></svg><i></i></div>
  <div class="f" style="left:174px;width:29px"><svg width="10" height="11" viewBox="0 0 10 11"><path d="M0 0H10L6 4.6V9L4 10.4V4.6Z" fill="#c9c9c9"/></svg><b style="position:absolute;left:13.5px;top:10.5px;width:1.5px;height:1.5px;background:#c9c9d6;box-shadow:3px 0 0 #c9c9d6"></b><i style="right:2.5px"></i></div>
  <div class="f" style="left:223px;width:104px"><svg width="10" height="11" viewBox="0 0 10 11"><path d="M0 0H10L6 4.6V9L4 10.4V4.6Z" fill="#c9c9c9"/></svg><i></i></div>
  <div class="f" style="left:347px;width:34px"><svg width="10" height="11" viewBox="0 0 10 11"><path d="M0 0H10L6 4.6V9L4 10.4V4.6Z" fill="#c9c9c9"/></svg><i></i></div>
  <div class="f" style="left:401px;width:104px"><svg width="10" height="11" viewBox="0 0 10 11"><path d="M0 0H10L6 4.6V9L4 10.4V4.6Z" fill="#c9c9c9"/></svg><i></i></div>
</div>
<div id="tbl">
<div class="gr" style="top:219px;height:26px"><b class="tg" style="left:4px;top:1px"></b><span style="left:30px;top:1px">Učebňa: K7</span><em style="top:1px">počet: 43</em></div>
<div class="gr" style="top:245px;height:34px"><u></u><b class="tg" style="left:28px;top:9px"></b><span style="left:54px;top:9px">Inventár: Elektronické zariadenia</span><em style="top:9px">počet: 7</em></div>
<div class="rw" style="top:279px;height:39px;line-height:38px"><u></u><u class="u2"></u><div class="c num" style="left:47px;width:45px">901</div><div class="c cis" style="left:92px;width:74px">25103001</div><div class="c rok" style="left:166px;width:49px">2022</div><div class="c naz" style="left:215px;width:124px"><span class="two">Dataprojektor -<br>Benq</span></div><div class="c poc" style="left:339px;width:54px">1</div><div class="c zod" style="left:393px;width:124px">Učiteľ 05</div><div class="c cen" style="left:517px;width:61px"></div><div class="c csp" style="left:578px;width:78px"></div><div class="c vyr" style="left:656px;width:114px"></div></div>
<div class="rw a" style="top:318px;height:39px;line-height:38px"><u></u><u class="u2"></u><div class="c num" style="left:47px;width:45px">902</div><div class="c cis" style="left:92px;width:74px">25103004</div><div class="c rok" style="left:166px;width:49px"></div><div class="c naz" style="left:215px;width:124px"><span class="two">počítač - Super<br>write master</span></div><div class="c poc" style="left:339px;width:54px">1</div><div class="c zod" style="left:393px;width:124px">Učiteľ 05</div><div class="c cen" style="left:517px;width:61px"></div><div class="c csp" style="left:578px;width:78px"></div><div class="c vyr" style="left:656px;width:114px"></div></div>
<div class="rw" style="top:357px;height:39px;line-height:38px"><u></u><u class="u2"></u><div class="c num" style="left:47px;width:45px">903</div><div class="c cis" style="left:92px;width:74px">A0035</div><div class="c rok" style="left:166px;width:49px">2024</div><div class="c naz" style="left:215px;width:124px"><span class="two">klávesnica -<br>Chicony</span></div><div class="c poc" style="left:339px;width:54px">1</div><div class="c zod" style="left:393px;width:124px">Učiteľ 05</div><div class="c cen" style="left:517px;width:61px"></div><div class="c csp" style="left:578px;width:78px"></div><div class="c vyr" style="left:656px;width:114px"></div></div>
<div class="rw a" style="top:396px;height:34px;line-height:35px"><u></u><u class="u2"></u><div class="c num" style="left:47px;width:45px">904</div><div class="c cis" style="left:92px;width:74px">A0027</div><div class="c rok" style="left:166px;width:49px">2024</div><div class="c naz" style="left:215px;width:124px">myš - Genius</div><div class="c poc" style="left:339px;width:54px">1</div><div class="c zod" style="left:393px;width:124px">Učiteľ 05</div><div class="c cen" style="left:517px;width:61px"></div><div class="c csp" style="left:578px;width:78px"></div><div class="c vyr" style="left:656px;width:114px"></div></div>
<div class="rw" style="top:430px;height:39px;line-height:38px"><u></u><u class="u2"></u><div class="c num" style="left:47px;width:45px">905</div><div class="c cis" style="left:92px;width:74px">A0023</div><div class="c rok" style="left:166px;width:49px">2024</div><div class="c naz" style="left:215px;width:124px"><span class="two">reproduktory -<br>Genius</span></div><div class="c poc" style="left:339px;width:54px">1</div><div class="c zod" style="left:393px;width:124px">Učiteľ 05</div><div class="c cen" style="left:517px;width:61px"></div><div class="c csp" style="left:578px;width:78px"></div><div class="c vyr" style="left:656px;width:114px"></div></div>
<div class="rw a" style="top:469px;height:34px;line-height:35px"><u></u><u class="u2"></u><div class="c num" style="left:47px;width:45px">906</div><div class="c cis" style="left:92px;width:74px">A0011</div><div class="c rok" style="left:166px;width:49px">2024</div><div class="c naz" style="left:215px;width:124px">TP link</div><div class="c poc" style="left:339px;width:54px">1</div><div class="c zod" style="left:393px;width:124px">Učiteľ 05</div><div class="c cen" style="left:517px;width:61px"></div><div class="c csp" style="left:578px;width:78px"></div><div class="c vyr" style="left:656px;width:114px"></div></div>
<div class="rw" style="top:503px;height:34px;line-height:35px"><u></u><u class="u2"></u><div class="c num" style="left:47px;width:45px">907</div><div class="c cis" style="left:92px;width:74px">200</div><div class="c rok" style="left:166px;width:49px"></div><div class="c naz" style="left:215px;width:124px">monitor - Benq</div><div class="c poc" style="left:339px;width:54px">1</div><div class="c zod" style="left:393px;width:124px">Učiteľ 05</div><div class="c cen" style="left:517px;width:61px"></div><div class="c csp" style="left:578px;width:78px"></div><div class="c vyr" style="left:656px;width:114px"></div></div>
<div class="rw ck" style="top:537px;height:36px;line-height:38px"><u></u><u class="u2"></u><div class="c" style="left:47px;width:292px;text-align:center;border-left:1px solid #c9dff1">Celkom</div><div class="c poc" style="left:339px;width:54px">7</div><div class="c" style="left:393px;width:377px;border-right:0"></div></div>
<div class="gr" style="top:573px;height:34px"><u></u><b class="tg" style="left:28px;top:9px"></b><span style="left:54px;top:9px">Inventár: Učebné pomôcky</span></div>
<div class="rw a" style="top:607px;height:39px;line-height:38px"><u></u><u class="u2"></u><div class="c num" style="left:47px;width:45px">908</div><div class="c cis" style="left:92px;width:74px">25103002</div><div class="c rok" style="left:166px;width:49px">2022</div><div class="c naz" style="left:215px;width:124px"><span class="two">korková nástenka<br>veľká</span></div><div class="c poc" style="left:339px;width:54px">1</div><div class="c zod" style="left:393px;width:124px">Učiteľ 05</div><div class="c cen" style="left:517px;width:61px"></div><div class="c csp" style="left:578px;width:78px"></div><div class="c vyr" style="left:656px;width:114px"></div></div>
<div class="rw ck" style="top:646px;height:36px;line-height:38px"><u></u><u class="u2"></u><div class="c" style="left:47px;width:292px;text-align:center;border-left:1px solid #c9dff1">Celkom</div><div class="c poc" style="left:339px;width:54px">1</div><div class="c" style="left:393px;width:377px;border-right:0"></div></div>
<div class="gr" style="top:682px;height:34px"><u></u><b class="tg" style="left:28px;top:9px"></b><span style="left:54px;top:9px">Inventár: Nábytok</span></div>
<div class="rw" style="top:716px;height:34px;line-height:35px"><u></u><u class="u2"></u><div class="c num" style="left:47px;width:45px">909</div><div class="c cis" style="left:92px;width:74px">2025_001</div><div class="c rok" style="left:166px;width:49px">2025</div><div class="c naz" style="left:215px;width:124px">Stolička vysoká</div><div class="c poc" style="left:339px;width:54px">100</div><div class="c zod" style="left:393px;width:124px">Učiteľ 05</div><div class="c cen" style="left:517px;width:61px"></div><div class="c csp" style="left:578px;width:78px"></div><div class="c vyr" style="left:656px;width:114px"></div></div>
<div class="rw a" style="top:750px;height:34px;line-height:35px"><u></u><u class="u2"></u><div class="c num" style="left:47px;width:45px">910</div><div class="c cis" style="left:92px;width:74px">A0021</div><div class="c rok" style="left:166px;width:49px">2024</div><div class="c naz" style="left:215px;width:124px">stôl žiacky</div><div class="c poc" style="left:339px;width:54px">13</div><div class="c zod" style="left:393px;width:124px">Učiteľ 05</div><div class="c cen" style="left:517px;width:61px"></div><div class="c csp" style="left:578px;width:78px"></div><div class="c vyr" style="left:656px;width:114px"></div></div>
<div class="rw" style="top:784px;height:34px;line-height:35px"><u></u><u class="u2"></u><div class="c num" style="left:47px;width:45px">911</div><div class="c cis" style="left:92px;width:74px">205</div><div class="c rok" style="left:166px;width:49px"></div><div class="c naz" style="left:215px;width:124px">stolička žiacka</div><div class="c poc" style="left:339px;width:54px">4</div><div class="c zod" style="left:393px;width:124px">Učiteľ 05</div><div class="c cen" style="left:517px;width:61px"></div><div class="c csp" style="left:578px;width:78px"></div><div class="c vyr" style="left:656px;width:114px"></div></div>
<div class="rw a" style="top:818px;height:39px;line-height:38px"><u></u><u class="u2"></u><div class="c num" style="left:47px;width:45px">912</div><div class="c cis" style="left:92px;width:74px">25103009</div><div class="c rok" style="left:166px;width:49px"></div><div class="c naz" style="left:215px;width:124px"><span class="two">skrinka dverová s<br>policou</span></div><div class="c poc" style="left:339px;width:54px">3</div><div class="c zod" style="left:393px;width:124px">Učiteľ 05</div><div class="c cen" style="left:517px;width:61px"></div><div class="c csp" style="left:578px;width:78px"></div><div class="c vyr" style="left:656px;width:114px"></div></div>
<div class="rw" style="top:857px;height:34px;line-height:35px"><u></u><u class="u2"></u><div class="c num" style="left:47px;width:45px">913</div><div class="c cis" style="left:92px;width:74px">265/58</div><div class="c rok" style="left:166px;width:49px">2020</div><div class="c naz" style="left:215px;width:124px">stolička žiacka</div><div class="c poc" style="left:339px;width:54px">1</div><div class="c zod" style="left:393px;width:124px">Učiteľ 05</div><div class="c cen" style="left:517px;width:61px"></div><div class="c csp" style="left:578px;width:78px"></div><div class="c vyr" style="left:656px;width:114px"></div></div>
<div class="rw a" style="top:891px;height:34px;line-height:35px"><u></u><u class="u2"></u><div class="c num" style="left:47px;width:45px">914</div><div class="c cis" style="left:92px;width:74px">232/34</div><div class="c rok" style="left:166px;width:49px">2020</div><div class="c naz" style="left:215px;width:124px">stolička žiacka</div><div class="c poc" style="left:339px;width:54px">1</div><div class="c zod" style="left:393px;width:124px">Učiteľ 05</div><div class="c cen" style="left:517px;width:61px"></div><div class="c csp" style="left:578px;width:78px"></div><div class="c vyr" style="left:656px;width:114px"></div></div>
<div class="rw" style="top:925px;height:35px;line-height:35px"><u></u><u class="u2"></u><div class="c num" style="left:47px;width:45px">915</div><div class="c cis" style="left:92px;width:74px">DKP 29/7</div><div class="c rok" style="left:166px;width:49px"></div><div class="c naz" style="left:215px;width:124px">stolík na pomôcky</div><div class="c poc" style="left:339px;width:54px">1</div><div class="c zod" style="left:393px;width:124px">Učiteľ 05</div><div class="c cen" style="left:517px;width:61px"></div><div class="c csp" style="left:578px;width:78px"></div><div class="c vyr" style="left:656px;width:114px"></div></div>
</div>
<div class="abs" style="left:1290px;top:219px;width:15px;height:741px;background:#f0f0f0"></div>
<div class="abs" style="left:1293px;top:223px;width:0;height:0;border-left:5px solid transparent;border-right:5px solid transparent;border-bottom:8px solid #8b8b8b"></div>
<div class="abs" style="left:1293px;top:949px;width:0;height:0;border-left:4.5px solid transparent;border-right:4.5px solid transparent;border-top:7px solid #8b8b8b"></div>
<div class="abs" style="left:1293px;top:830px;width:9px;height:17px;border-radius:5px;background:#8b8b8b"></div>
<div class="hl" style="left:243px;top:214px;width:113px;height:29px;border-color:#ff0000;z-index:6"></div>
<div class="hl" style="left:266px;top:249px;width:217px;height:26px;border-color:#ffa500;z-index:4"></div>
<div class="hl" style="left:267px;top:574px;width:185px;height:35px;border-color:#ffa500;z-index:4"></div>
<div class="hl" style="left:268px;top:683px;width:181px;height:30px;border-color:#ffa500;z-index:4"></div>
<!--DIALOG-START-->
<style>
#dlg{position:absolute;left:676px;top:311px;width:601px;height:474px;background:#fff;border-radius:4px 4px 0 0;box-shadow:4px 4px 8px -1px rgba(0,0,0,.5);z-index:20}
#dlg .tt{position:absolute;left:0;top:0;width:601px;height:26px;background:#465a65;border-radius:4px 4px 0 0;color:#fff;font-weight:bold;font-size:12px;line-height:26px;padding-left:14.6px}
#dlg .tab{position:absolute;top:56px;height:24px;border:1px solid #cfcfcf;border-bottom:0;background:#fff;font-size:12px;line-height:23px;text-align:center;color:#222}
#dlg .pan{position:absolute;left:12px;top:80px;width:576px;height:331px;border:1px solid #858585;border-top:3px solid #3d85c6}
.it{position:absolute;left:20px;width:250px;height:25px;border-radius:6px;background:#ececec;font-size:12px;line-height:25px;color:#333;padding-left:19.4px;white-space:nowrap}
.it .dh{position:absolute;left:4px;top:7.4px;width:10.6px;height:1.7px;background:#cecece;box-shadow:0 3.2px 0 #cecece,0 6.4px 0 #cecece}
.it .fo{position:absolute;left:215px;top:6px}
.it .x{position:absolute;left:237.6px;top:8.3px}
.it .sg{position:absolute;left:217px;top:0;font-size:13.5px;color:#333}
.hl{position:absolute;border-style:solid;border-width:4px}
</style>
<div id="dlg">
<div class="tt">Pohľad - Stĺpce
 <svg class="abs" style="left:563px;top:9px" width="8.5" height="8.5" viewBox="0 0 9 9"><path d="M4.4 0H9V4.6L7.4 3 3 7.4 4.6 9H0V4.4L1.6 6 6 1.6Z" fill="#fff"/></svg>
 <svg class="abs" style="left:583px;top:9px" width="9.4" height="9.4" viewBox="0 0 9.4 9.4"><path d="M1 1L8.4 8.4M8.4 1L1 8.4" stroke="#fff" stroke-width="2.8"/></svg>
</div>
<div class="abs" style="left:12.6px;top:32px;font-size:12px;color:#333">Tabuľka: Inventár</div>
<div class="tab" style="left:14px;width:66px;background:#3d85c6;border-color:#3d85c6;color:#fff;font-weight:bold;letter-spacing:-0.3px">Vybrané</div>
<div class="tab" style="left:82px;width:90px">Základné (3)</div>
<div class="tab" style="left:174px;width:82px">Ostatné (8)</div>
<div class="pan"></div>

<div class="it" style="top:95px"><i class="dh"></i>Učebňa<svg class="fo" width="12" height="10" viewBox="0 0 12 10"><defs><linearGradient id="fg0" x1="0" y1="0" x2="0.4" y2="1"><stop offset="0" stop-color="#b0b0b0"/><stop offset="1" stop-color="#3c3c3c"/></linearGradient></defs><path d="M0.6 2Q0.6 0.6 2 0.6H3.8Q4.6 0.6 5 1.2L5.6 2.1H9.8Q11.4 2.1 11.4 3.6V7.9Q11.4 9.4 9.8 9.4H2.2Q0.6 9.4 0.6 7.9Z" fill="none" stroke="url(#fg0)" stroke-width="1.1"/></svg><svg class="x" width="8" height="8" viewBox="0 0 8 8"><path d="M0.9 0.9L7.1 7.1M7.1 0.9L0.9 7.1" stroke="#cfcfcf" stroke-width="2.3"/></svg></div>
<div class="it" style="top:123px"><i class="dh"></i>Inventár<svg class="fo" width="12" height="10" viewBox="0 0 12 10"><defs><linearGradient id="fg1" x1="0" y1="0" x2="0.4" y2="1"><stop offset="0" stop-color="#b0b0b0"/><stop offset="1" stop-color="#3c3c3c"/></linearGradient></defs><path d="M0.6 2Q0.6 0.6 2 0.6H3.8Q4.6 0.6 5 1.2L5.6 2.1H9.8Q11.4 2.1 11.4 3.6V7.9Q11.4 9.4 9.8 9.4H2.2Q0.6 9.4 0.6 7.9Z" fill="none" stroke="url(#fg1)" stroke-width="1.1"/></svg><svg class="x" width="8" height="8" viewBox="0 0 8 8"><path d="M0.9 0.9L7.1 7.1M7.1 0.9L0.9 7.1" stroke="#cfcfcf" stroke-width="2.3"/></svg></div>
<div class="it" style="top:151px"><i class="dh"></i>Poradové číslo<svg class="x" width="8" height="8" viewBox="0 0 8 8"><path d="M0.9 0.9L7.1 7.1M7.1 0.9L0.9 7.1" stroke="#cfcfcf" stroke-width="2.3"/></svg></div>
<div class="it" style="top:179px"><i class="dh"></i>Číslo<svg class="fo" width="12" height="10" viewBox="0 0 12 10"><defs><linearGradient id="fg3" x1="0" y1="0" x2="0.4" y2="1"><stop offset="0" stop-color="#d6d6d6"/><stop offset="1" stop-color="#cdcdcd"/></linearGradient></defs><path d="M0.6 2Q0.6 0.6 2 0.6H3.8Q4.6 0.6 5 1.2L5.6 2.1H9.8Q11.4 2.1 11.4 3.6V7.9Q11.4 9.4 9.8 9.4H2.2Q0.6 9.4 0.6 7.9Z" fill="none" stroke="url(#fg3)" stroke-width="1.1"/></svg><svg class="x" width="8" height="8" viewBox="0 0 8 8"><path d="M0.9 0.9L7.1 7.1M7.1 0.9L0.9 7.1" stroke="#cfcfcf" stroke-width="2.3"/></svg></div>
<div class="it" style="top:207px"><i class="dh"></i>Rok<svg class="fo" width="12" height="10" viewBox="0 0 12 10"><defs><linearGradient id="fg4" x1="0" y1="0" x2="0.4" y2="1"><stop offset="0" stop-color="#d6d6d6"/><stop offset="1" stop-color="#cdcdcd"/></linearGradient></defs><path d="M0.6 2Q0.6 0.6 2 0.6H3.8Q4.6 0.6 5 1.2L5.6 2.1H9.8Q11.4 2.1 11.4 3.6V7.9Q11.4 9.4 9.8 9.4H2.2Q0.6 9.4 0.6 7.9Z" fill="none" stroke="url(#fg4)" stroke-width="1.1"/></svg><svg class="x" width="8" height="8" viewBox="0 0 8 8"><path d="M0.9 0.9L7.1 7.1M7.1 0.9L0.9 7.1" stroke="#cfcfcf" stroke-width="2.3"/></svg></div>
<div class="it" style="top:235px"><i class="dh"></i>Názov<svg class="fo" width="12" height="10" viewBox="0 0 12 10"><defs><linearGradient id="fg5" x1="0" y1="0" x2="0.4" y2="1"><stop offset="0" stop-color="#d6d6d6"/><stop offset="1" stop-color="#cdcdcd"/></linearGradient></defs><path d="M0.6 2Q0.6 0.6 2 0.6H3.8Q4.6 0.6 5 1.2L5.6 2.1H9.8Q11.4 2.1 11.4 3.6V7.9Q11.4 9.4 9.8 9.4H2.2Q0.6 9.4 0.6 7.9Z" fill="none" stroke="url(#fg5)" stroke-width="1.1"/></svg><svg class="x" width="8" height="8" viewBox="0 0 8 8"><path d="M0.9 0.9L7.1 7.1M7.1 0.9L0.9 7.1" stroke="#cfcfcf" stroke-width="2.3"/></svg></div>
<div class="it" style="top:263px"><i class="dh"></i>Počet<span class="sg">Σ</span><svg class="x" width="8" height="8" viewBox="0 0 8 8"><path d="M0.9 0.9L7.1 7.1M7.1 0.9L0.9 7.1" stroke="#cfcfcf" stroke-width="2.3"/></svg></div>
<div class="it" style="top:291px"><i class="dh"></i>Zodpovedná osoba<svg class="fo" width="12" height="10" viewBox="0 0 12 10"><defs><linearGradient id="fg7" x1="0" y1="0" x2="0.4" y2="1"><stop offset="0" stop-color="#d6d6d6"/><stop offset="1" stop-color="#cdcdcd"/></linearGradient></defs><path d="M0.6 2Q0.6 0.6 2 0.6H3.8Q4.6 0.6 5 1.2L5.6 2.1H9.8Q11.4 2.1 11.4 3.6V7.9Q11.4 9.4 9.8 9.4H2.2Q0.6 9.4 0.6 7.9Z" fill="none" stroke="url(#fg7)" stroke-width="1.1"/></svg><svg class="x" width="8" height="8" viewBox="0 0 8 8"><path d="M0.9 0.9L7.1 7.1M7.1 0.9L0.9 7.1" stroke="#cfcfcf" stroke-width="2.3"/></svg></div>
<div class="it" style="top:319px"><i class="dh"></i>Cena<svg class="x" width="8" height="8" viewBox="0 0 8 8"><path d="M0.9 0.9L7.1 7.1M7.1 0.9L0.9 7.1" stroke="#cfcfcf" stroke-width="2.3"/></svg></div>
<div class="it" style="top:347px"><i class="dh"></i>Cena spolu<span class="sg">Σ</span><svg class="x" width="8" height="8" viewBox="0 0 8 8"><path d="M0.9 0.9L7.1 7.1M7.1 0.9L0.9 7.1" stroke="#cfcfcf" stroke-width="2.3"/></svg></div>
<div class="it" style="top:375px"><i class="dh"></i>Výrobné číslo<svg class="x" width="8" height="8" viewBox="0 0 8 8"><path d="M0.9 0.9L7.1 7.1M7.1 0.9L0.9 7.1" stroke="#cfcfcf" stroke-width="2.3"/></svg></div>
<div class="hl" style="left:224px;top:92px;width:33px;height:28px;border-color:#ff0000"></div>
<div class="hl" style="left:225px;top:123px;width:33px;height:27px;border-color:#ffa500"></div>
<div class="abs" style="left:280px;top:92px;width:0;height:312px;border-left:1px dashed #dcdcdc"></div>
<div class="abs" style="left:291px;top:93px;font-size:12px;color:#333">Pridať:</div>
<div class="abs" style="left:332px;top:90px;width:245px;height:20px;border:1px solid #bdbdbd;font-size:12px;line-height:18px;padding-left:3px;color:#9a9a9a">Hľadať</div>
<div class="abs" style="left:291px;top:140px;width:290px;font-size:12px;line-height:14px;color:#333">Stĺpce môžete zoradiť potiahnutím <i style="display:inline-block;width:10.6px;height:1.7px;background:#cecece;box-shadow:0 3.2px 0 #cecece,0 6.4px 0 #cecece;position:relative;top:-7.4px;margin:0"></i> hore/dole a<br>zoskupiť kliknutím na ikonu <svg width="11" height="9" viewBox="0 0 13 11" style="position:relative;top:0"><path d="M0.6 2.2Q0.6 0.6 2 0.6H4.4Q5.2 0.6 5.6 1.3L6 2.1H10.8Q12.4 2.1 12.4 3.6V8.8Q12.4 10.4 10.8 10.4H2.2Q0.6 10.4 0.6 8.8Z" fill="none" stroke="#cfcfcf" stroke-width="1.2"/></svg>.</div>
<div class="abs" style="left:295px;top:211px;width:13px;height:13px;border-radius:2.5px;background:#1a73e8"><svg width="13" height="13" viewBox="-0.5 -0.5 13 13" style="display:block"><path d="M2.5 6.2L5 8.6 9.6 3.2" fill="none" stroke="#fff" stroke-width="1.8"/></svg></div>
<div class="abs" style="left:311px;top:210px;font-size:12px;color:#333">Zobraziť: Celkom</div>
<div class="abs" style="left:295px;top:230px;width:13px;height:13px;border-radius:2.5px;border:1px solid #707070;background:#fff"></div>
<div class="abs" style="left:311px;top:229px;font-size:12px;color:#333">Kompaktné zobrazenie</div>
<div class="abs" style="left:0;top:423px;width:601px;height:1px;background:#dedede"></div>
<div class="abs" style="left:490px;top:434px;width:38px;height:30px;border-radius:3px;background:#55a955;border:1px solid #4b9a4b;color:#fff;font-size:12px;line-height:28px;text-align:center">Ok</div>
<div class="abs" style="left:534px;top:434px;width:53px;height:30px;border-radius:3px;background:#f5f6fa;border:1px solid #dcdde3;color:#333;font-size:12px;line-height:28px;text-align:center">Zrušiť</div>
</div>
<!--DIALOG-END-->

<!--MAIN-END-->

</div></div>
</body>
</html>
